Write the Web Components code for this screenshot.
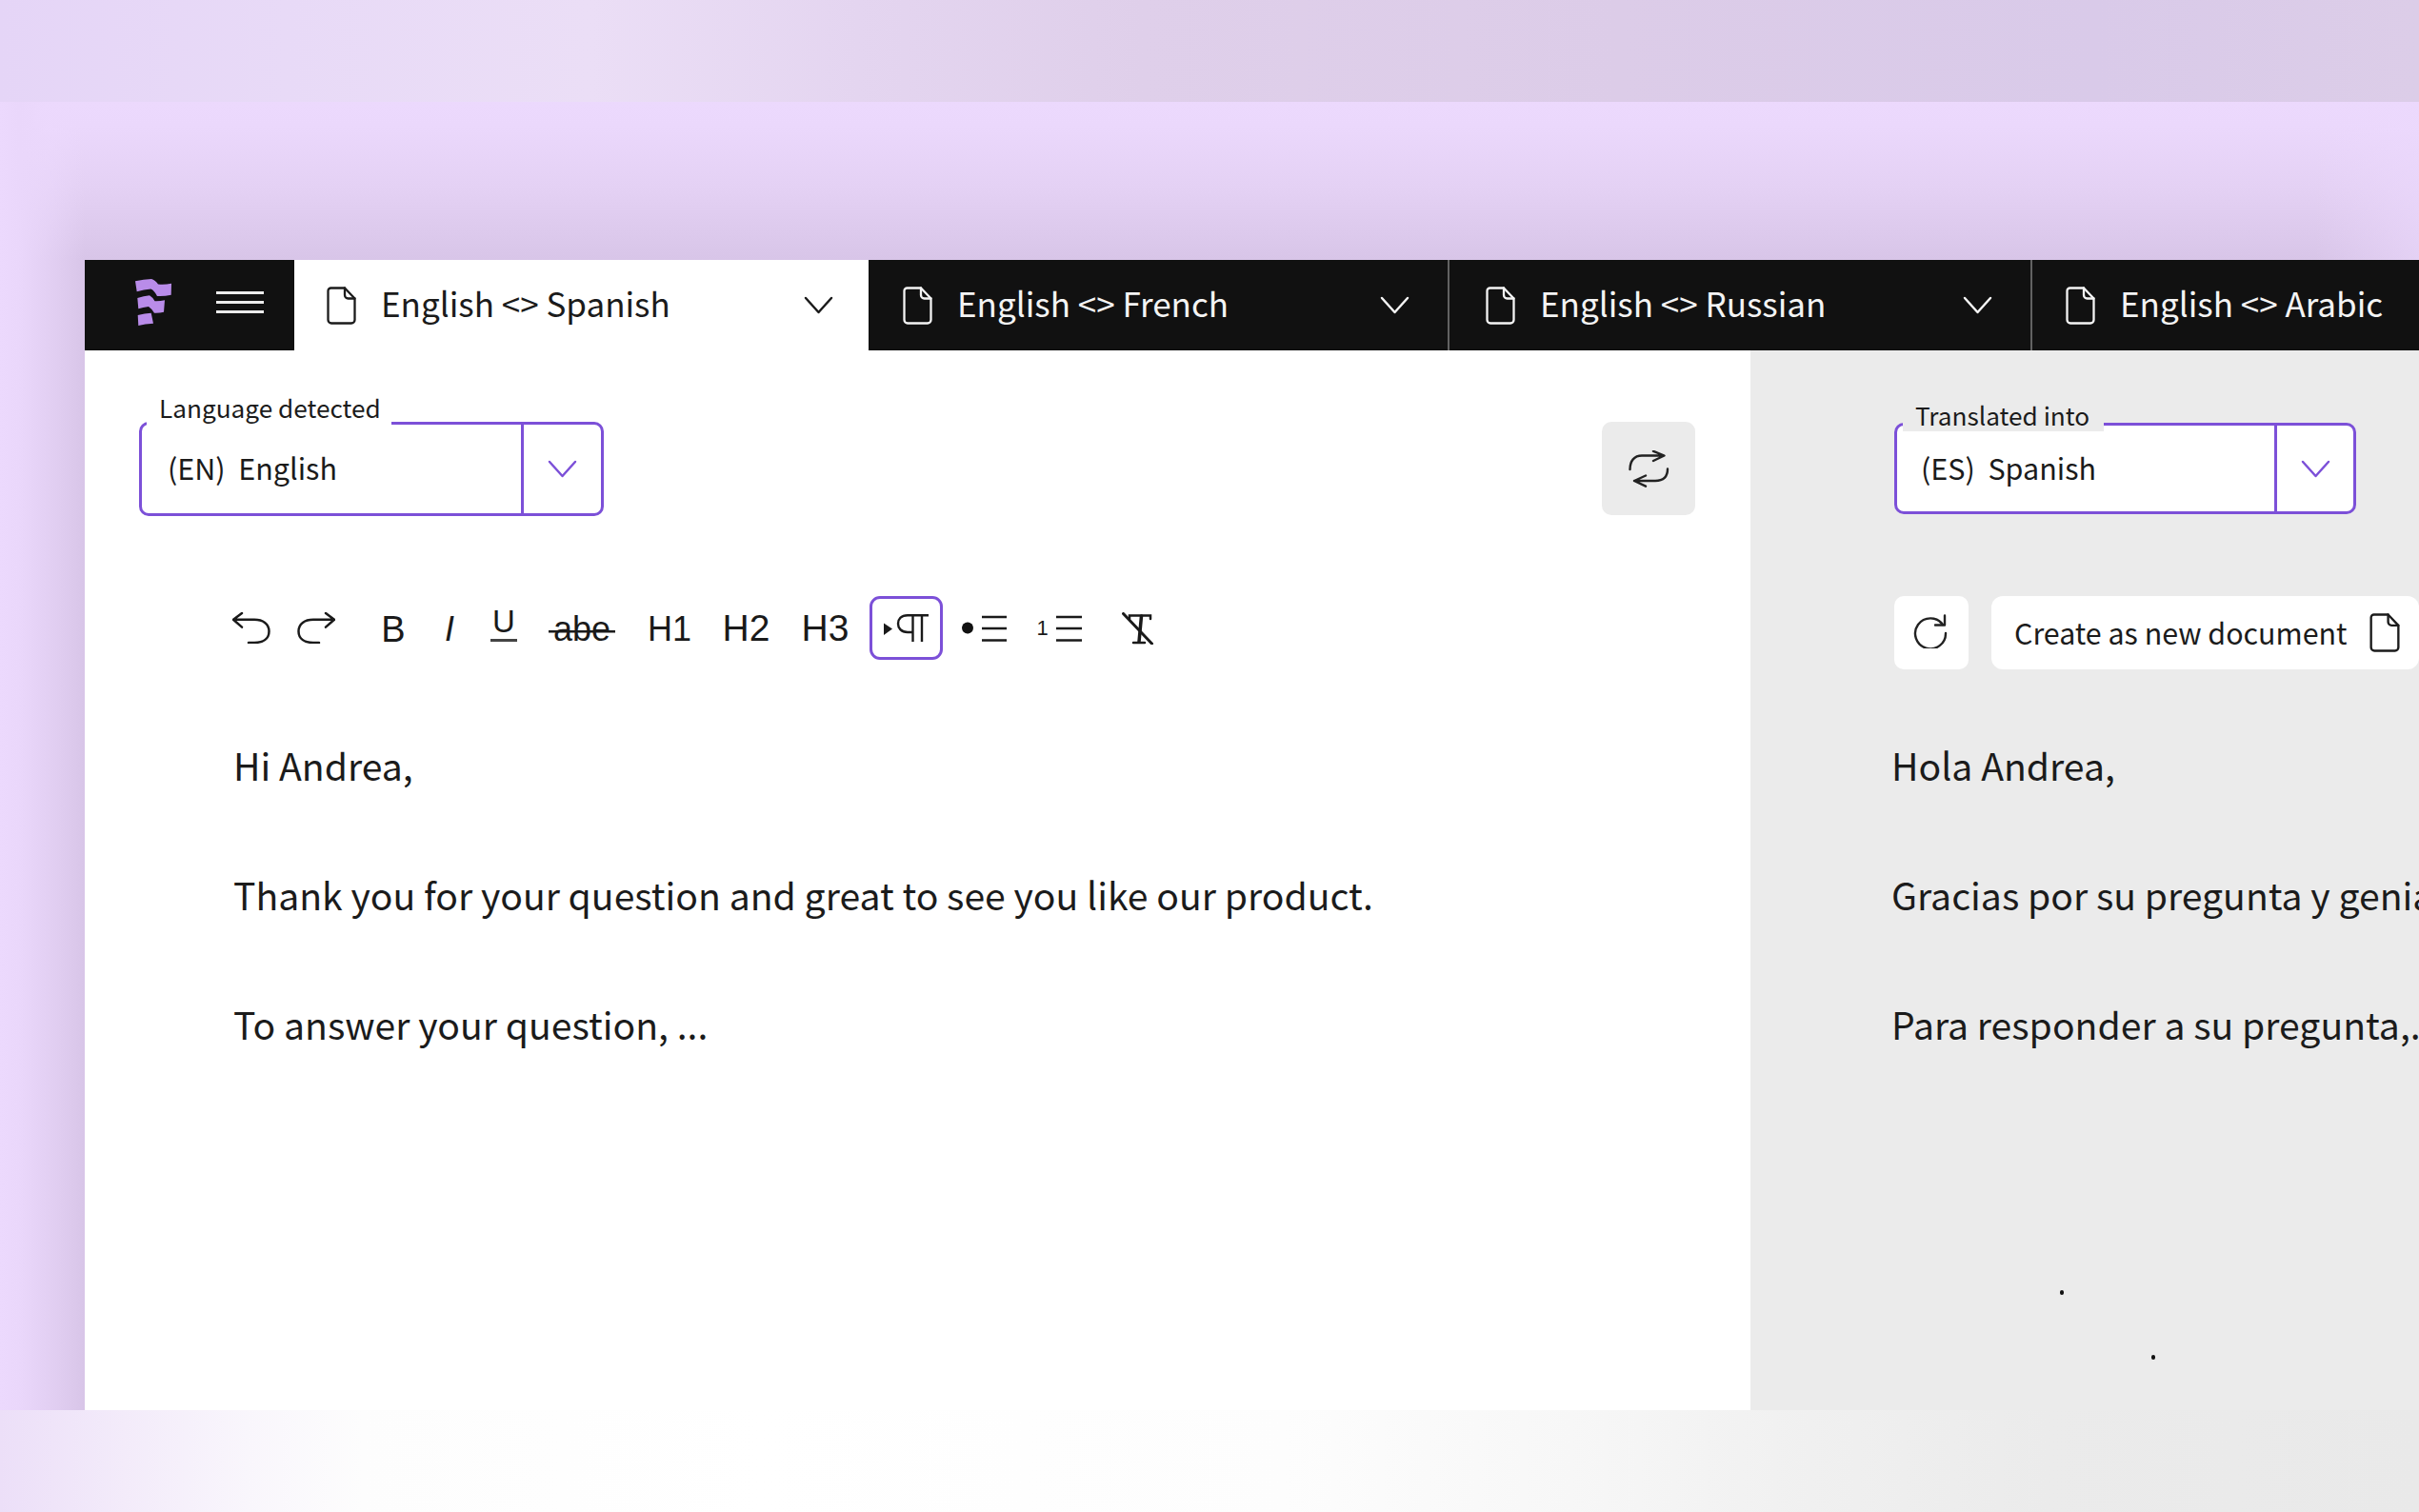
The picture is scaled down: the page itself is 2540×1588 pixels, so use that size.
<!DOCTYPE html>
<html lang="en">
<head>
<meta charset="utf-8">
<title>Translator</title>
<style>
html,body{margin:0;padding:0;width:2540px;height:1588px;overflow:hidden;background:#fff}
body{font-family:"Noto Sans CJK SC","Source Sans Pro","Noto Sans",sans-serif;color:#151515}
</style>
</head>
<body>
<app-stage>
  <app-window>
    <tab-bar slot="tabs">
      <brand-cell></brand-cell>
      <doc-tab active style="--w:603px;--pl:34px;--pr:37px">English &lt;&gt; Spanish</doc-tab>
      <doc-tab style="--w:608px;--pl:36px;--pr:40px">English &lt;&gt; French</doc-tab>
      <doc-tab sep style="--w:612px;--pl:38px;--pr:40px">English &lt;&gt; Russian</doc-tab>
      <doc-tab sep nochevron style="--w:319px;--pl:35px;--pr:0px">English &lt;&gt; Arabic</doc-tab>
    </tab-bar>
    <source-panel slot="left">
      <lang-select slot="head" style="--w:488px;--h:99px;--side:84px;--ltop:-32px;--lleft:5px;--lbg:#fff;--lh:33px;--lpl:13px;--lpr:11px;--vp:27px"><span slot="label">Language detected</span>(EN)  English</lang-select>
      <icon-button slot="head" style="--w:98px;--h:98px;--bg:#ebebeb">
        <svg width="43" height="39" viewBox="0 0 43 39" fill="none" stroke="#222" stroke-width="2.4" stroke-linecap="round" stroke-linejoin="round"><path d="M1.5 20C1.5 11 6 5.500 14 5.500H37M26 .8 37.500 5.500 26 11M41 19.500C41 28 36 32 28 32H6M18 26.500 6 32 18 37.700"/></svg>
      </icon-button>
      <format-bar slot="tools">
        <tool-item style="--w:46px"><svg width="40" height="33" viewBox="0 0 40 33" fill="none" stroke="#1a1a1a" stroke-width="2.500" stroke-linecap="round" stroke-linejoin="round"><path d="M10 1 1 7.800 10 15.600M1 7.800H23C32 7.800 38.500 12 38.500 20S32 32 23 32H17"/></svg></tool-item>
        <tool-item style="--w:90px"><svg width="40" height="33" viewBox="0 0 40 33" fill="none" stroke="#1a1a1a" stroke-width="2.500" stroke-linecap="round" stroke-linejoin="round"><path d="M30 1 39 7.800 30 15.600M39 7.800H17C8 7.800 1.500 12 1.500 20S8 32 17 32H23"/></svg></tool-item>
        <tool-item style="--w:72px;--f:38px;--t:2px">B</tool-item>
        <tool-item style="--w:46px;--t:2px"><i>I</i></tool-item>
        <tool-item style="--w:68px"><span style="display:inline-block;font-size:33px;line-height:26px;border-bottom:3px solid #444;padding:0 2px 5px;margin-bottom:6px">U</span></tool-item>
        <tool-item style="--w:96px;--t:2px"><span style="padding:0 5px;background:linear-gradient(#1a1a1a,#1a1a1a) 0 58%/100% 2.500px no-repeat">abe</span></tool-item>
        <tool-item style="--w:88px;--t:2px">H1</tool-item>
        <tool-item style="--w:73px;--f:39px">H2</tool-item>
        <tool-item style="--w:93px;--f:39px">H3</tool-item>
        <tool-item active style="--w:77px">
          <svg width="50" height="30" viewBox="0 0 50 30" fill="none" stroke="#1a1a1a" stroke-width="2.400"><path d="M1 9.500 10 15.500 1 22Z" fill="#1a1a1a" stroke="none"/><path d="M48 1.200H26C19 1.200 16 5.500 16 10S19 19 26 19H31.500M31.500 1.200V29M41 1.200V29"/></svg>
        </tool-item>
        <tool-item style="--w:87px"><svg width="47" height="28" viewBox="0 0 47 28" fill="none" stroke="#1a1a1a" stroke-width="2.400"><circle cx="6" cy="13.500" r="6" fill="#111" stroke="none"/><path d="M21 2H47M21 14H47M21 26.500H47"/></svg></tool-item>
        <tool-item style="--w:70px"><list-num>1</list-num><svg width="28" height="28" viewBox="0 0 28 28" fill="none" stroke="#1a1a1a" stroke-width="2.400"><path d="M1 2H28M1 14H28M1 26.500H28"/></svg></tool-item>
        <tool-item style="--w:94px"><svg width="33" height="34" viewBox="0 0 33 34" fill="none" stroke="#1a1a1a" stroke-linecap="round"><path d="M1.500 1.500 31.500 33" stroke-width="3"/><path d="M8 7V3.500H30V7" stroke-width="2.500"/><path d="M20.500 4 18 31" stroke-width="3.500"/><path d="M12 32H24" stroke-width="2.500"/></svg></tool-item>
      </format-bar>
      <text-line>Hi Andrea,</text-line>
      <text-line>Thank you for your question and great to see you like our product.</text-line>
      <text-line>To answer your question, ...</text-line>
    </source-panel>
    <target-panel slot="right">
      <lang-select slot="head" style="--w:485px;--h:96px;--side:83px;--ltop:-24px;--lleft:6px;--lbg:#ebebeb;--lh:30px;--lpl:13px;--lpr:15px;--vp:25px"><span slot="label">Translated into</span>(ES)  Spanish</lang-select>
      <icon-button slot="tools" style="--w:78px;--h:77px;--bg:#fff">
        <svg width="36" height="36" viewBox="0 0 36 36" fill="none" stroke="#222" stroke-width="2.400" stroke-linecap="round" stroke-linejoin="round" style="margin:0 2px 3px 0"><path d="M31 11A16 16 0 1 0 34 20"/><path d="M33 1.500V11.500H23"/></svg>
      </icon-button>
      <create-button slot="tools">Create as new document</create-button>
      <text-line>Hola Andrea,</text-line>
      <text-line>Gracias por su pregunta y genial</text-line>
      <text-line>Para responder a su pregunta,..</text-line>
      <stray-dot style="--x:325px;--y:987px"></stray-dot>
      <stray-dot style="--x:421px;--y:1055px"></stray-dot>
    </target-panel>
  </app-window>
</app-stage>
<script>
const DOC = (c, w=31, h=40) => `<svg width="${w}" height="${h}" viewBox="0 0 31 40" fill="none" stroke="${c}" stroke-width="2.300" stroke-linejoin="round" stroke-linecap="round" style="flex:none"><path d="M4.500 1.500H19L29.500 12.500V35A3.500 3.500 0 0 1 26 38.500H5A3.500 3.500 0 0 1 1.500 35V4.500A3 3 0 0 1 4.500 1.500Z"/><path d="M19 1.500V9A3.500 3.500 0 0 0 22.500 12.500H29.500"/></svg>`;
const CHEV = (c) => `<svg width="31" height="19" viewBox="0 0 31 19" fill="none" stroke="${c}" stroke-width="2.500" stroke-linecap="round" stroke-linejoin="round" style="flex:none"><path d="M2 2 15.500 17 29 2"/></svg>`;
function el(name, html){
  customElements.define(name, class extends HTMLElement{
    constructor(){super();this.attachShadow({mode:'open'});}
    connectedCallback(){this.shadowRoot.innerHTML = typeof html==='function'?html(this):html;}
  });
}
el('app-stage',`<style>
:host{display:grid;grid-template-rows:107px 1374px 107px;width:2540px;height:1588px;overflow:hidden}
.top{background:linear-gradient(90deg,#e5d5f7 0,#e8daf7 300px,#ebdef6 620px,#e4d5f0 900px,#dfcfea 1200px,#dccce8 1700px,#d9cae9 2200px,#dccde8 2540px)}
.mid{padding:166px 0 0 89px;box-sizing:border-box;overflow:hidden;
 background:linear-gradient(90deg,#ecd9fd 0,#ead7fb 20px,rgba(236,217,253,.55) 50px,rgba(236,217,253,0) 89px) 0 0/89px 100% no-repeat,linear-gradient(270deg,rgba(236,217,253,.6) 0,rgba(236,217,253,0) 110px) 100% 0/110px 166px no-repeat,linear-gradient(180deg,#ecd9fd 0,#ebd8fc 25px,#e4d1f4 90px,#d8c5e8 166px)}
.bot{background:linear-gradient(90deg,#ecdff8 0,#f3ebfa 130px,#f9f6fc 260px,#fdfdfd 380px,#fff 800px,#fdfdfd 1350px,#f7f7f7 1650px,#f0f0f0 1900px,#ebebeb 2150px,#e9e9e9 2540px)}
</style><div class="top"></div><div class="mid"><slot></slot></div><div class="bot"></div>`);
el('app-window',`<style>
:host{display:grid;grid-template-rows:95px 1113px;grid-template-columns:1749px 702px;width:2451px;height:1208px;position:relative}
.t{grid-column:1/3}
</style><div class="t"><slot name="tabs"></slot></div><slot name="left"></slot><slot name="right"></slot>`);
el('tab-bar',`<style>:host{display:flex;height:95px;background:#111}</style><slot></slot>`);
el('brand-cell',`<style>
:host{display:flex;align-items:center;flex:none;width:220px;height:95px;box-sizing:border-box;padding:0 0 6px 53px;gap:47px;background:#111}
.b{display:flex;flex-direction:column;gap:7px;width:50px}
.b i{display:block;height:3px;background:#ececec}
</style>
<svg width="38" height="49" viewBox="0 0 38 49" fill="#b98ce9"><path d="M0 2.300Q9 .5 17 0 21 1 24 5.500 30 6.500 38 4.700L37.700 16.700Q30 18.500 23 18 20 12 16.500 10.500 9 11 1.700 13.300Z"/><path d="M2.300 20Q9 18 15 17.300 18 19 20.500 23.300 26 23.500 31 22.300L30 34.700Q25 36 20 35.700 17 31 14 29 8 30 3.300 31.300Z"/><path d="M2.700 38Q10 36 16.700 35.700L19 46.700Q10 47 3.300 49Z"/></svg>
<div class="b"><i></i><i></i><i></i></div>`);
el('doc-tab',(h)=>{const a=h.hasAttribute('active');const c=a?'#1b1b1b':'#f4f4f4';return `<style>
:host{display:flex;align-items:center;flex:none;box-sizing:border-box;width:var(--w);height:95px;padding:0 var(--pr) 0 var(--pl);background:${a?'#fff':'#111'};color:${c};font-size:35px;line-height:50px;white-space:nowrap;gap:26px;${h.hasAttribute('sep')?'border-left:2px solid #626262;':''}}
.t{flex:1;padding-bottom:6px}
</style>${DOC(c)}<span class="t"><slot></slot></span>${h.hasAttribute('nochevron')?'':CHEV(c)}`});
el('source-panel',`<style>
:host{display:block;background:#fff;height:1113px;overflow:hidden;box-sizing:border-box}
.head{display:flex;justify-content:space-between;align-items:flex-start;padding:75px 58px 0 57px}
.tools{padding:84px 0 44px 152px}
.body{padding-left:156px}
</style><div class="head"><slot name="head"></slot></div><div class="tools"><slot name="tools"></slot></div><div class="body"><slot></slot></div>`);
el('target-panel',`<style>
:host{display:block;background:#ebebeb;height:1113px;overflow:hidden;position:relative;box-sizing:border-box}
.head{padding:76px 0 0 151px}
.tools{display:flex;gap:24px;padding:86px 0 34px 151px}
.body{padding-left:148px}
</style><div class="head"><slot name="head"></slot></div><div class="tools"><slot name="tools"></slot></div><div class="body"><slot></slot></div>`);
el('lang-select',(h)=>`<style>
:host{display:grid;grid-template-columns:1fr var(--side);box-sizing:border-box;width:var(--w);height:var(--h);background:#fff;border:3px solid #7c50d8;border-radius:10px;position:relative;font-size:30.500px;color:#1b1b1b;flex:none}
.v{display:flex;align-items:center;padding:0 0 3px var(--vp);white-space:pre}
.c{display:flex;align-items:center;justify-content:center;border-left:3px solid #7c50d8}
.l{position:absolute;top:var(--ltop);left:var(--lleft);height:var(--lh);line-height:calc(var(--lh) - 4px);padding:0 var(--lpr) 0 var(--lpl);background:var(--lbg);font-size:26.200px;white-space:nowrap}
</style><div class="l"><slot name="label"></slot></div><div class="v"><slot></slot></div><div class="c">${CHEV('#7c50d8')}</div>`);
el('icon-button',`<style>
:host{display:flex;align-items:center;justify-content:center;flex:none;width:var(--w);height:var(--h);background:var(--bg);border-radius:10px}
</style><slot></slot>`);
el('create-button',()=>`<style>
:host{display:flex;align-items:center;justify-content:space-between;flex:none;box-sizing:border-box;width:449px;height:77px;padding:0 20px 0 24px;background:#fff;border-radius:12px;font-size:30.400px;color:#1b1b1b;white-space:nowrap}
span{padding-bottom:2px}
</style><span><slot></slot></span>${DOC('#1b1b1b',32,41)}`);
el('format-bar',`<style>:host{display:flex;align-items:center;height:67px}</style><slot></slot>`);
el('tool-item',(h)=>`<style>
:host{display:flex;align-items:center;justify-content:center;flex:none;box-sizing:border-box;width:var(--w);height:67px;padding-top:var(--t,0px);font:var(--f,36px)/1 "Liberation Sans",Arial,sans-serif;color:#1a1a1a;${h.hasAttribute('active')?'border:3px solid #7c50d8;border-radius:11px;':''}}
</style><slot></slot>`);
el('list-num',`<style>:host{display:inline-block;font:22px/1 "Liberation Sans",Arial,sans-serif;margin-right:7px}</style><slot></slot>`);
el('text-line',`<style>:host{display:block;font-size:39.150px;line-height:133px;height:136px;white-space:nowrap;color:#1b1b1b}</style><slot></slot>`);
el('stray-dot',`<style>:host{position:absolute;left:var(--x);top:var(--y);width:4px;height:5px;border-radius:2px;background:#111}</style>`);
</script>
</body>
</html>
